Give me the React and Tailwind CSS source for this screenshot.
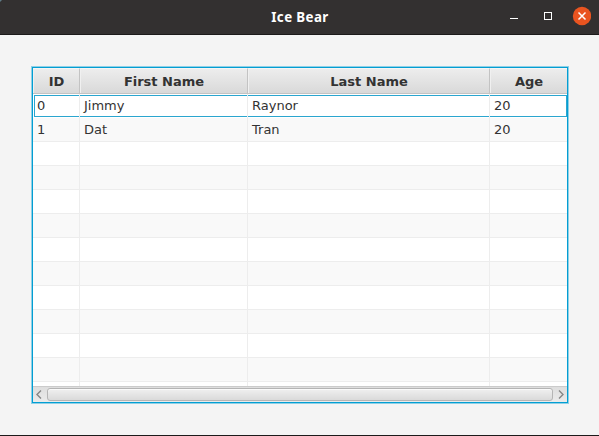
const columns = [
  { title: 'ID', width: 'w-[47px]' },
  { title: 'First Name', width: 'w-[168px]' },
  { title: 'Last Name', width: 'w-[242px]' },
  { title: 'Age', width: 'w-[77px]' },
];

const people = [
  ['0', 'Jimmy', 'Raynor', '20'],
  ['1', 'Dat', 'Tran', '20'],
];

const rows = Array.from({ length: 13 }, (_, i) => people[i] ?? ['', '', '', '']);

function TitleBar() {
  return (
    <header className="relative flex h-[35px] shrink-0 items-center justify-end border-b border-[#1c1a1a] bg-[#333030] pr-2">
      <h1 className="absolute inset-x-0 top-[7px] pl-px text-center font-['Noto_Sans',sans-serif] text-[13.33px] leading-5 font-bold tracking-[0.4px] text-white">
        Ice Bear
      </h1>
      <svg className="absolute top-0 left-0 h-1 w-1" viewBox="0 0 4 4">
        <path d="M0 0h2L0 2z" fill="#5f7b86" />
      </svg>
      <svg className="h-[34px] w-[90px]" viewBox="501 0 90 34">
        <rect x="510" y="18" width="8" height="1" fill="#fff" />
        <rect x="544.5" y="12.5" width="7" height="7" fill="none" stroke="#fff" />
        <circle cx="582" cy="16" r="9.2" fill="#e95420" />
        <path d="M578.5 12.5l7 7M585.5 12.5l-7 7" stroke="#fff" strokeWidth="1.5" />
      </svg>
    </header>
  );
}

function HeaderRow() {
  return (
    <div className="flex h-[26px] shrink-0 border-b border-[#c3c3c3]">
      {columns.map((c, i) => (
        <div
          key={c.title}
          className={`${c.width} flex items-center justify-center border-t border-l border-t-[#f5f5f5] border-l-[#f0f0f0] bg-linear-to-b from-[#ededed] to-[#d9d9d9] pt-px font-bold ${
            i < 3 ? 'border-r border-r-[#c3c3c3]' : ''
          }`}
        >
          {c.title}
        </div>
      ))}
    </div>
  );
}

function Row({ cells, index }) {
  return (
    <div
      className={`relative flex h-6 shrink-0 ${index % 2 ? 'bg-[#f9f9f9]' : 'bg-white'} ${
        index > 0 ? 'border-b border-[#ededed]' : ''
      }`}
    >
      {index === 0 && (
        <div className="absolute top-px right-0 bottom-px left-px border border-[#2ba6cf]" />
      )}
      {cells.map((text, i) => (
        <div
          key={i}
          className={`${columns[i].width} relative pl-1 leading-[23px] ${
            i < 3 ? 'border-r border-[#ededed]' : ''
          }`}
        >
          {text}
        </div>
      ))}
    </div>
  );
}

function ScrollBar() {
  return (
    <div className="flex h-4 shrink-0 items-center border-t border-[#cbcbcb] bg-linear-to-b from-[#dedede] to-[#ebebeb]">
      <svg className="h-[15px] w-[14px]" viewBox="0 0 14 15" fill="none" stroke="#858585" strokeWidth="1.4">
        <path d="M8 3.5L4 7.5l4 4" />
      </svg>
      <div className="h-[13px] w-[506px] rounded-[3px] border border-[#b5b5b5] bg-linear-to-b from-[#f0f0f0] to-[#dadada] shadow-[inset_0_1px_0_#fafafa]" />
      <svg className="h-[15px] w-[14px]" viewBox="0 0 14 15" fill="none" stroke="#858585" strokeWidth="1.4">
        <path d="M6 3.5l4 4-4 4" />
      </svg>
    </div>
  );
}

export default function App() {
  return (
    <div className="flex h-[436px] w-[599px] flex-col overflow-hidden border-b border-[#1c1a1a] bg-[#f4f4f4] font-['DejaVu_Sans',sans-serif] text-[13px] text-[#333333]">
      <TitleBar />
      <main className="pt-8 pl-8">
        <div className="flex h-[336px] w-[536px] flex-col border border-[#039ed3] bg-white shadow-[0_0_0_1px_#8fd0e6]">
          <HeaderRow />
          <div className="flex h-[292px] shrink-0 flex-col overflow-hidden">
            {rows.map((cells, i) => (
              <Row key={i} cells={cells} index={i} />
            ))}
          </div>
          <ScrollBar />
        </div>
      </main>
    </div>
  );
}
